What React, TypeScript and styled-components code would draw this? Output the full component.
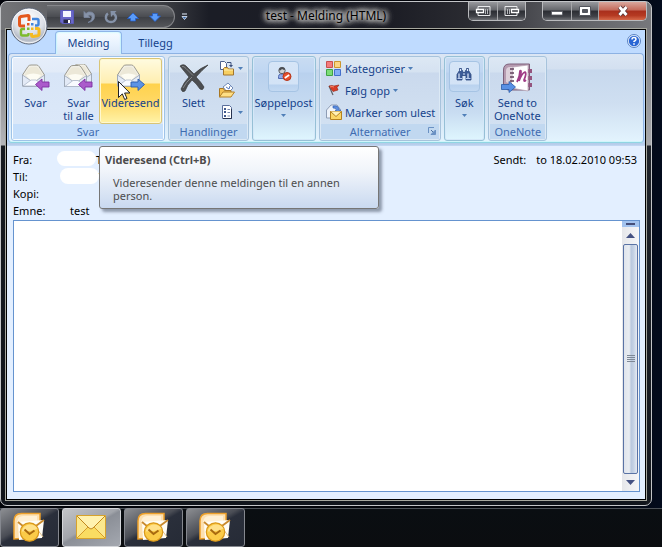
import React from "react";
import styled, { createGlobalStyle, css } from "styled-components";

const GlobalStyle = createGlobalStyle`
  * { box-sizing: border-box; }
  html, body { margin: 0; padding: 0; background: #02040a; }
  body, button { font-family: "Noto Sans", "Open Sans", sans-serif; font-size: 11px; line-height: 13px; }
  button { margin: 0; padding: 0; border: 0; background: none; color: inherit; }
  svg { display: block; flex: none; }
`;

const Desktop = styled.div`
  position: relative;
  display: flex;
  flex-direction: column;
  gap: 2px;
  min-height: 100vh;
  padding-top: 1px;
  background: linear-gradient(90deg, #02040a 90%, #030b1c);
`;

/* ---------- window frame ---------- */

const Window = styled.main`
  flex: 1;
  display: flex;
  flex-direction: column;
  margin-right: 10px;
  padding: 0 4px 4px;
  border: 1px solid #c3c5c8;
  border-radius: 7px;
  background:
    linear-gradient(90deg, #747578 0, #5c5d61 10%, #404247 24%, #1b1d26 32%, #1c1d25 60%, #2a2b31 72%, #5f6065 88%, #77787c 100%) top / 100% 28px no-repeat,
    linear-gradient(180deg, #55575c 0, #b4b5b8 143px, #171b21 144px, #10141b 100%) left / 5px 100% no-repeat,
    linear-gradient(180deg, #6e7076 0, #a8a9ad 143px, #20242b 144px, #15191f 100%) right / 5px 100% no-repeat,
    #11151c;
`;

const TitleBar = styled.header`
  display: grid;
  grid-template-columns: 1fr auto 1fr;
  height: 26px;
`;

const QuickAccess = styled.div`
  display: flex;
  align-items: center;
  align-self: start;
  justify-self: start;
  height: 23px;
  margin: 3px 0 0 42px;
`;

const QuickTools = styled.div`
  display: flex;
  align-items: center;
  gap: 4px;
  height: 23px;
  padding: 0 10px 0 11px;
  border: 1px solid #85868a;
  border-left: 0;
  border-radius: 0 12px 12px 0;
  background: linear-gradient(180deg, #6b6d71, #4b4d52 50%, #3e4045 52%, #55575b);
`;

const QuickButton = styled.button`
  display: grid;
  place-items: center;
  width: 18px;
  height: 18px;
`;

const Title = styled.h1`
  margin: 0;
  padding: 6px 4px 0;
  font-size: 12px;
  line-height: 16px;
  font-weight: 400;
  color: #000;
  text-shadow: 0 0 4px #bbb, 0 0 4px #bbb, 0 0 5px #aaa, 0 0 6px #aaa, 0 0 6px #aaa, 0 0 8px #999, 0 0 8px #999, 0 0 10px #888;
`;

const CaptionArea = styled.div`
  display: flex;
  align-items: flex-start;
  justify-content: flex-end;
  gap: 16px;
`;

const CaptionGroup = styled.div`
  display: flex;
  height: 19px;
  border: 1px solid #b9babd;
  border-top: 0;
  border-radius: 0 0 5px 5px;
  overflow: hidden;
`;

const CaptionButton = styled.button<{ $w: number; $close?: boolean }>`
  display: grid;
  place-items: center;
  width: ${(p) => p.$w}px;
  height: 18px;
  border-right: 1px solid #a5a6a9;
  background: ${(p) =>
    p.$close
      ? "linear-gradient(180deg, #d9a79d 0, #c46a5a 45%, #a92f1c 50%, #b53a22 75%, #d5694a 100%)"
      : "linear-gradient(180deg, #98999d 0, #64666b 45%, #2b2d33 50%, #404248 80%, #6d6f74 100%)"};
  &:last-child { border-right: 0; }
`;

const Client = styled.div`
  flex: 1;
  display: flex;
  flex-direction: column;
  border: 1px solid #a7a89f;
  outline: 1px solid #000;
  outline-offset: -2px;
  padding: 1px;
  background: #e3efff;
`;

const OrbButton = styled.button`
  position: absolute;
  left: 10px;
  top: 7px;
  z-index: 2;
  width: 38px;
  height: 38px;
`;

/* ---------- ribbon ---------- */

const RibbonShell = styled.section`
  padding: 0 1px 3px;
  background: linear-gradient(180deg, #bfdbff 0, #bfdbff 109px, #b4cbe8 114px, #c5daf5 100%);
`;

const TabRow = styled.nav`
  display: flex;
  align-items: flex-end;
  height: 23px;
  padding-left: 47px;
`;

const Tab = styled.button<{ $active?: boolean }>`
  height: 22px;
  width: 67px;
  padding-bottom: 1px;
  color: #15428b;
  border: 1px solid transparent;
  border-bottom: 0;
  border-radius: 4px 4px 0 0;
  ${(p) =>
    p.$active &&
    css`
      position: relative;
      margin-bottom: -1px;
      height: 23px;
      border-color: #8fb5e8;
      background: linear-gradient(180deg, #f7fbff, #e9f3fe 50%, #dbe8f8);
      box-shadow: inset 0 1px 2px #d8fbff, inset 1px 0 1px #c5f2fd, inset -1px 0 1px #c5f2fd;
    `}
`;

const HelpButton = styled.button`
  margin: 0 3px 5px auto;
`;

const Ribbon = styled.div`
  display: flex;
  gap: 3px;
  height: 90px;
  padding: 2px;
  border: 1px solid #8db2e3;
  border-bottom-color: #8fd5e3;
  border-radius: 4px;
  background: linear-gradient(180deg, #dbe6f4 0, #d3e0f0 15px, #c7d8ed 16px, #cfdff1 50px, #e3f4fe 100%);
  box-shadow: inset 0 -1px 0 #cff6fb;
`;

const GroupBox = styled.section<{ $hot?: boolean; $plain?: boolean }>`
  display: flex;
  flex-direction: column;
  height: 85px;
  border: 1px solid ${(p) => (p.$hot ? "#9fc3e8" : p.$plain ? "#96c0d6" : "#a7c3dc")};
  border-radius: 3px;
  ${(p) =>
    p.$hot
      ? css`
          background: linear-gradient(180deg, #e6eefa 0, #e2ebf8 15px, #d8e5f7 16px, #dce9f9 100%);
          box-shadow: inset 0 0 0 1px #f8fcff;
        `
      : p.$plain
        ? css`
            background: linear-gradient(180deg, #c9dcf2 0, #bfd6f2 15px, #b9d1ee 16px, #c8dcf1 55px, #dff6fe 100%);
            box-shadow: inset 0 0 0 1px #d5e8f8;
          `
        : css`
            background: linear-gradient(180deg, #dde8f4 0, #d5e2f1 15px, #cad9ed 16px, #d4e3f3 100%);
            box-shadow: inset 0 0 0 1px #dce9f5;
          `}
`;

const GroupItems = styled.div`
  flex: 1;
  display: flex;
  align-items: flex-start;
  padding: 0 2px 0 1px;
`;

const GroupLabel = styled.div<{ $hot?: boolean }>`
  position: relative;
  height: 15px;
  margin: 0 1px 1px;
  line-height: 15px;
  text-align: center;
  color: #3f6cb0;
  background: ${(p) => (p.$hot ? "#c6dffb" : "#c1d8f0")};
`;

const Launcher = styled.button`
  position: absolute;
  right: 3px;
  top: 3px;
`;

const BigButton = styled.button<{ $w: number; $hover?: boolean }>`
  display: flex;
  flex-direction: column;
  align-items: center;
  width: ${(p) => p.$w}px;
  height: 66px;
  margin-top: 1px;
  padding-top: 2px;
  border: 1px solid transparent;
  border-radius: 3px;
  color: #15428b;
  white-space: nowrap;
  ${(p) =>
    p.$hover &&
    css`
      border-color: #d9c577;
      background: linear-gradient(180deg, #fffbe0 0, #ffeeb0 24px, #ffd24c 25px, #ffd864 42px, #fff3a8 100%);
      box-shadow: inset 0 0 0 1px #fff8cf;
    `}
`;

const BigIcon = styled.span`
  display: grid;
  place-items: center;
  height: 34px;
  margin-bottom: 1px;
`;

const FramedIcon = styled(BigIcon)`
  width: 31px;
  height: 31px;
  margin-bottom: 4px;
  padding-bottom: 6px;
  border: 1px solid #a6c4e4;
  border-radius: 4px;
  background: linear-gradient(180deg, #d6e5f7 0, #d3e3f6 22px, #b9d2ef 23px, #c3d9f2 100%);
`;

const DropMark = styled.span`
  display: grid;
  place-items: center;
  height: 12px;
`;

const SmallColumn = styled.div<{ $wide?: boolean }>`
  display: flex;
  flex-direction: column;
  padding-left: ${(p) => (p.$wide ? 3 : 0)}px;
`;

const SmallButton = styled.button`
  display: flex;
  align-items: center;
  gap: 3px;
  height: 22px;
  padding: 0 3px 0 2px;
  color: #15428b;
  white-space: nowrap;
`;

const HoverAnchor = styled.div`
  position: relative;
`;

const Tooltip = styled.div`
  position: absolute;
  left: 0;
  top: 89px;
  z-index: 5;
  width: 280px;
  min-height: 63px;
  padding: 6px 5px;
  border: 1px solid #767676;
  border-radius: 3px;
  color: #4c4c4c;
  background: linear-gradient(180deg, #fff, #f0f4fa 40%, #c9d9f0);
  box-shadow: 3px 3px 3px rgba(60, 70, 90, 0.5);
`;

const TipTitle = styled.strong`
  display: block;
  margin-bottom: 10px;
`;

const TipText = styled.p`
  margin: 0 24px 0 8px;
`;

/* ---------- message ---------- */

const MessageHead = styled.section`
  display: flex;
  justify-content: space-between;
  padding: 5px 8px 1px 6px;
  color: #000;
`;

const Fields = styled.dl`
  display: grid;
  grid-template-columns: 44px auto;
  grid-auto-rows: 17px;
  margin: 0;
  line-height: 17px;
`;

const Term = styled.dt`
  white-space: nowrap;
`;

const Value = styled.dd`
  display: flex;
  margin: 0;
  padding-left: 13px;
`;

const HiddenName = styled.span<{ $second?: boolean }>`
  width: 39px;
  height: ${(p) => (p.$second ? 16 : 15)}px;
  margin: ${(p) => (p.$second ? "0 0 0 -10px" : "0 0 0 -13px")};
  border-radius: 8px;
  background: #fff;
`;

const Sent = styled.dl`
  display: flex;
  gap: 10px;
  margin: 0;
  line-height: 17px;
`;

const SentValue = styled.dd`
  margin: 0;
`;

const Body = styled.section`
  flex: 1;
  display: flex;
  margin: 0 5px 7px 6px;
  border: 1px solid #6593cf;
  background: #fff;
`;

const Page = styled.article`
  flex: 1;
`;

const ScrollBar = styled.div`
  display: flex;
  flex-direction: column;
  width: 17px;
  background: linear-gradient(90deg, #e6e7ea, #f5f6f8);
`;

const SplitHandle = styled.button`
  display: grid;
  place-items: center;
  height: 6px;
  background: #a3c3ee;
`;

const ScrollButton = styled.button`
  display: grid;
  place-items: center;
  height: 17px;
`;

const Thumb = styled.div`
  flex: 1;
  display: grid;
  place-items: center;
  margin: 0 1px;
  border: 1px solid #5a73a5;
  border-radius: 2px;
  background: linear-gradient(90deg, #dfe4ec 0, #e9edf2 40%, #b9c8de 55%, #c6d3e5 75%, #e6ebf3 100%);
`;

/* ---------- taskbar ---------- */

const Taskbar = styled.footer`
  display: flex;
  gap: 3px;
  height: 39px;
  border-top: 1px solid #4c5157;
  background: linear-gradient(180deg, #0a0e12, #0b0d10);
`;

const TaskButton = styled.button<{ $active?: boolean }>`
  display: grid;
  place-items: center;
  width: 59px;
  height: 39px;
  margin-top: -1px;
  padding-right: 2px;
  padding-bottom: 2px;
  border: 1px solid ${(p) => (p.$active ? "#d4d6da" : "#85888f")};
  border-radius: 3px;
  background: ${(p) =>
    p.$active
      ? "linear-gradient(150deg, #c3c5c9 0, #a2a5ab 45%, #8b8f97 50%, #a4a8b0 100%)"
      : "linear-gradient(150deg, #8c8e92 0, #4a4d55 42%, #2a2f3b 50%, #262b36 100%)"};
`;

/* ---------- drawings ---------- */

const Arrow = () => (
  <svg width="5" height="3" viewBox="0 0 5 3" aria-hidden="true">
    <path d="M0 0h5L2.500 3z" fill="#4f7fb8" />
  </svg>
);

const Envelope = ({ x = 0, y = 0 }: { x?: number; y?: number }) => (
  <g transform={`translate(${x} ${y})`}>
    <path d="M.5 11 6 2.500Q7 1 9 1h5.500Q16 1 17 2.500L22.500 11v11H.5z" fill="#f1efe6" stroke="#9c9a8f" />
    <path d="M2.500 10.500 7 4Q8 3 9 3h5.500l1.500 1 4.500 6.500-6 5.500H8.500z" fill="#ece8d8" />
    <path d="M4 11q7-3 15 0l-4 5H8z" fill="#fdfcf3" />
    <path d="M.5 11 8.500 16.500h6L22.500 11v11H.5z" fill="#e3eaf6" stroke="#98a3b5" strokeWidth=".8" />
    <path d="M1 22l8-6h5l8 6z" fill="#f8fbff" stroke="#a5b0c3" strokeWidth=".7" />
  </g>
);

const PurpleArrow = ({ x }: { x: number }) => (
  <path
    transform={`translate(${x} 0)`}
    d="M.5 20.500 7 15v3h7v5H7v3.500z"
    fill="#ab5bcb"
    stroke="#7d2fa0"
    strokeWidth=".9"
  />
);

const ReplyIcon = () => (
  <svg width="28" height="28" viewBox="0 0 28 28" aria-hidden="true">
    <Envelope />
    <PurpleArrow x={13} />
  </svg>
);

const ReplyAllIcon = () => (
  <svg width="30" height="28" viewBox="0 0 30 28" aria-hidden="true">
    <Envelope x={5} y={-1} />
    <Envelope y={0.5} />
    <PurpleArrow x={14} />
  </svg>
);

const ForwardIcon = () => (
  <svg width="28" height="28" viewBox="0 0 28 28" aria-hidden="true">
    <Envelope />
    <path d="M27.500 20.500 21 15v3h-7v5h7v3.500z" fill="#5c93e4" stroke="#2b5cad" strokeWidth=".9" />
  </svg>
);

const DeleteIcon = () => (
  <svg width="30" height="28" viewBox="0 0 30 28" aria-hidden="true">
    <path
      d="M1 2q4-3 7 1l7 7q6-6 14-9-6 5-12 12 5 5 8 10-1 4-4 2-4-6-8-9-5 5-7 11-3 2-4-2 3-7 8-12Q5 7 1 2z"
      fill="#4c4e51"
      stroke="#38393b"
      strokeWidth=".7"
    />
    <path d="M3 2.500q2-.5 4 2l7 7M4 24q3-6 9-11" stroke="#85878a" fill="none" />
  </svg>
);

const MoveIcon = () => (
  <svg width="16" height="16" viewBox="0 0 16 16" aria-hidden="true">
    <path d="M1.500 1.500h4l2 2v6h-6z" fill="#fff" stroke="#4e6390" />
    <path d="M8 2.500h4v3" stroke="#3c507d" fill="none" />
    <path d="M10 5h4l-2 2.500z" fill="#3c507d" />
    <path d="M4.500 15V8.500l1-1h3l1 1.500h5V15z" fill="#f7cf62" stroke="#a3752c" />
    <path d="M5 10h9" stroke="#fff0b0" />
  </svg>
);

const FolderIcon = () => (
  <svg width="16" height="16" viewBox="0 0 16 16" aria-hidden="true">
    <path d="m4 5 5-4 5 5-5 5z" fill="#fff" stroke="#7089b6" />
    <path d="M7 5l3 2 1-3" stroke="#5578bd" fill="none" />
    <path d="M.5 15V6.500h4l1 2H12V11z" fill="#f4c152" stroke="#a87724" />
    <path d="m.5 15 3.500-5h11.500L12 15z" fill="#ffdf86" stroke="#b3812a" />
  </svg>
);

const RulesIcon = () => (
  <svg width="16" height="16" viewBox="0 0 16 16" aria-hidden="true">
    <path d="M3.500 1.500h7l2 2v11h-9z" fill="#fff" stroke="#5a6f9c" />
    <path d="M5 4h2v2H5zM5 7h2v2H5zM5 11h2v2H5z" fill="#41598c" />
    <path d="M8.500 5.500H11M8.500 8.500H11M8.500 12H11" stroke="#7185ae" />
    <path d="M12.500 5v9.500H4" stroke="#283450" fill="none" />
  </svg>
);

const JunkIcon = () => (
  <svg width="16" height="16" viewBox="0 0 16 16" aria-hidden="true">
    <path d="M2.500 12.500v-2q0-2 2-2.500h3l2 1v3.500z" fill="#8fa9e6" stroke="#5069b0" />
    <circle cx="6" cy="4.500" r="3.200" fill="#d0d2d4" stroke="#5c6066" />
    <path d="M3 4.500Q3 1.200 6.500 1.200q2.500.3 2.500 2.800Q7 4 6 3 5 4.500 3 4.500z" fill="#4b4e54" />
    <circle cx="11" cy="10.500" r="4" fill="#e8502c" stroke="#b5361a" />
    <path d="m8.800 12 4.400-3" stroke="#fff" strokeWidth="1.600" />
  </svg>
);

const CategoriesIcon = () => (
  <svg width="16" height="16" viewBox="0 0 16 16" aria-hidden="true">
    <path d="M.5 1.500h6v6h-6z" fill="#f47c7c" stroke="#c95050" />
    <path d="M8.500 1.500h6v6h-6z" fill="#fbd582" stroke="#cc962e" />
    <path d="M.5 9.500h6v6h-6z" fill="#7cdd76" stroke="#40a344" />
    <path d="M8.500 9.500h6v6h-6z" fill="#84aef6" stroke="#446fcb" />
  </svg>
);

const FlagIcon = () => (
  <svg width="16" height="16" viewBox="0 0 16 16" aria-hidden="true">
    <path d="m3 4 4 9" stroke="#5d6067" strokeWidth="1.200" />
    <path d="M3 4q3-1 5 0l5-1-2 2.500 1 2.500-5 1.500z" fill="#d83c27" stroke="#93220f" strokeWidth=".6" />
    <path d="M4 5q2-1 4 0" stroke="#f58a6b" fill="none" />
  </svg>
);

const UnreadIcon = () => (
  <svg width="16" height="16" viewBox="0 0 16 16" aria-hidden="true">
    <path d="M.5 14V6L5 1h6l3 4v9z" fill="#eef3fa" stroke="#8e9db5" />
    <path d="M7 2q6-1 6 4h2l-3 3-3-3h2q0-2-4-2z" fill="#5b8de0" stroke="#2e5cae" strokeWidth=".6" />
    <path d="M4.500 7.500h11v8h-11z" fill="#fbd667" stroke="#b5821f" />
    <path d="m4.500 7.500 5.500 5 5.500-5" fill="#fff2b8" stroke="#b5821f" />
  </svg>
);

const BinocularsIcon = () => (
  <svg width="16" height="16" viewBox="0 0 16 16" aria-hidden="true">
    <path d="M3.500 2.500h2v2h1l.5 2h2l.5-2h1v-2h2v2l2.500 4v5.500h-5V9.500H6V14H1V8.500l2.500-4z" fill="#3d5c98" stroke="#2b477f" strokeWidth=".8" />
    <path d="M3 7.500V13M12 7.500V13M4.500 3v2M11.500 3v2" stroke="#dfe9fa" strokeWidth="1.200" />
    <path d="M1.500 12.500H6M10 12.500h4.500" stroke="#b9cdf0" />
    <path d="M7 8h2" stroke="#dfe9fa" />
  </svg>
);

const OneNoteIcon = () => (
  <svg width="32" height="32" viewBox="0 0 32 32" aria-hidden="true">
    <path d="M2.500 22V8q0-6 6-6h20v26h-22z" fill="#b69bb0" stroke="#7d607a" />
    <path d="M5 20V9q0-4 4-4h5v20z" fill="#ddd0da" />
    <path d="M27 7h4v4h-4zM27 14h4v4h-4zM27 21h4v4h-4z" fill="#94547e" />
    <path d="m12 5 15-2v26l-17-3z" fill="#fff" stroke="#b5a1b2" strokeWidth=".7" />
    <path d="M9 7h4M9 11h4M9 15h4M9 19h4" stroke="#60405b" strokeWidth="1.500" />
    <path d="M16 20q3-6 3-11 1-1 1 1 0 4-2 9 3-8 6-9 2 1-1 8 0 2 2 0" fill="none" stroke="#a13d87" strokeWidth="1.800" />
    <path d="M14.500 25 8 19.500V22.500H.5v5H8v3z" fill="#5990e4" stroke="#2a5aa8" strokeWidth=".8" />
  </svg>
);

const LauncherIcon = () => (
  <svg width="8" height="8" viewBox="0 0 8 8" aria-hidden="true">
    <path d="M.5 6V.5H6" fill="none" stroke="#6a91c3" />
    <path d="M3 3l2.500 2.500" stroke="#4c719f" />
    <path d="M7.500 3v4.500H3z" fill="#6a91c3" stroke="#6a91c3" />
  </svg>
);

const OfficeOrb = () => (
  <svg width="38" height="38" viewBox="0 0 38 38" aria-hidden="true">
    <defs>
      <radialGradient id="orb" cx=".5" cy=".3" r=".75">
        <stop offset="0" stopColor="#fff" />
        <stop offset=".55" stopColor="#dde0e7" />
        <stop offset=".8" stopColor="#b4bac5" />
        <stop offset="1" stopColor="#f2f6fb" />
      </radialGradient>
    </defs>
    <circle cx="19" cy="19" r="18" fill="url(#orb)" stroke="#596273" />
    <circle cx="19" cy="19" r="16.800" fill="none" stroke="#fff" strokeOpacity=".7" />
    <g fill="none">
      <path d="M15 19h-4q-1.500 0-1.500-1.500V11q0-1 1.500-1.500l7-1q1 0 1 1V14" stroke="#e4581d" strokeWidth="3" />
      <path d="M22 12h5q1.500 0 1.500 1.500V17q0 1.500-1.500 1.500h-2" stroke="#4386dc" strokeWidth="2.400" />
      <path d="M15 22h-2.500q-1.500 0-1.500 1.500V27q0 1.500 1.500 1.500H17q1.500 0 1.500-1.500v-1" stroke="#7dbb2c" strokeWidth="2.400" />
      <path d="M25 21.500h2.500q1.500 0 1.500 1.500v4.500q0 1-1.500 1.300L23 29.500q-1.500 0-1.500-1.500v-2" stroke="#f5ba20" strokeWidth="3" />
    </g>
    <path d="M17 16h2.500v2.500H17z" fill="#e4581d" />
    <path d="M21 16h2.500v2.500H21z" fill="#4386dc" />
    <path d="M17 20.500h2.500V23H17z" fill="#7dbb2c" />
    <path d="M21 20.500h2.500V23H21z" fill="#f5ba20" />
  </svg>
);

const SaveIcon = () => (
  <svg width="14" height="14" viewBox="0 0 14 14" aria-hidden="true">
    <path d="M.5.5h13v13H2L.5 12z" fill="#6967c8" stroke="#5a5ab8" />
    <path d="M3 1h8v6H3z" fill="#f4f6ff" />
    <path d="M3.500 9.500h7V13h-7z" fill="#23243f" />
    <path d="M8 10h2v3H8z" fill="#fff" />
  </svg>
);

const UndoIcon = () => (
  <svg width="14" height="14" viewBox="0 0 14 14" aria-hidden="true">
    <path d="M2 1.500v6h6L6 5.500q4-1.500 4 2t-4 5q6.500-1 6.500-6t-6-4.500L4 3.500z" fill="#8793a9" stroke="#7b88a0" strokeWidth=".8" />
  </svg>
);

const RepeatIcon = () => (
  <svg width="14" height="14" viewBox="0 0 14 14" aria-hidden="true">
    <path d="M4 3.500Q1.500 5 2 8.500 3 12 7 12t5-4q0-3-2.500-4.500" fill="none" stroke="#8592a8" strokeWidth="2.400" />
    <path d="M6.500 1h6l-5.500 6z" fill="#8592a8" />
  </svg>
);

const UpIcon = () => (
  <svg width="14" height="14" viewBox="0 0 14 14" aria-hidden="true">
    <path d="m7 3 5.500 5.500H9.500V11h-5V8.500h-3z" fill="#5a9bf8" stroke="#245ec9" strokeWidth=".8" />
  </svg>
);

const DownIcon = () => (
  <svg width="14" height="14" viewBox="0 0 14 14" aria-hidden="true">
    <path d="M7 11.500 12.500 6H9.500V3.500h-5V6h-3z" fill="#5a9bf8" stroke="#245ec9" strokeWidth=".8" />
  </svg>
);

const MoreIcon = () => (
  <svg width="7" height="8" viewBox="0 0 7 8" aria-hidden="true">
    <path d="M1 1h5" stroke="#e6f0ff" />
    <path d="M1 3.500h5L3.500 6.500z" fill="#3767a8" stroke="#e6f0ff" strokeWidth=".8" />
  </svg>
);

const DockIcon = ({ flip }: { flip?: boolean }) => (
  <svg width="16" height="12" viewBox="0 0 16 12" aria-hidden="true">
    <g transform={flip ? "translate(16 0) scale(-1 1)" : undefined} fill="none">
      <path d="M3 4V1.500h12v9H3V8" stroke="#e8e9eb" />
      <path d="M1.500 4.500h7v3h-7z" fill="#33363c" stroke="#fff" strokeWidth="1.300" />
      <path d="M10.500 4v5M12.500 4v5" stroke="#b4b6ba" />
    </g>
  </svg>
);

const MinIcon = () => (
  <svg width="12" height="10" viewBox="0 0 12 10" aria-hidden="true">
    <path d="M.5 5.500h11v3.500H.5z" fill="#fff" stroke="#53565e" strokeWidth=".8" />
  </svg>
);

const MaxIcon = () => (
  <svg width="12" height="10" viewBox="0 0 12 10" aria-hidden="true">
    <path d="M.5.5h11v9H.5z" fill="#fff" stroke="#53565e" />
    <path d="M3.500 3.500h5v3h-5z" fill="#53565e" stroke="#53565e" />
  </svg>
);

const CloseIcon = () => (
  <svg width="14" height="12" viewBox="0 0 14 12" aria-hidden="true">
    <path d="M3.500 2l7 8M10.500 2l-7 8" stroke="#5e3a3c" strokeWidth="4.600" />
    <path d="M3.500 2l7 8M10.500 2l-7 8" stroke="#fff" strokeWidth="2.800" />
  </svg>
);

const HelpIcon = () => (
  <svg width="14" height="14" viewBox="0 0 14 14" aria-hidden="true">
    <circle cx="7" cy="7" r="6.500" fill="#eaf3ff" stroke="#5a83c2" />
    <circle cx="7" cy="7" r="5.200" fill="#2a66d4" />
    <path d="M5 5.500Q5 3.500 7 3.500t2 1.700Q9 6.300 7 7.500V8" fill="none" stroke="#fff" strokeWidth="1.500" />
    <path d="M6.200 9.200h1.600v1.500H6.200z" fill="#fff" />
  </svg>
);

const ScrollArrow = ({ down }: { down?: boolean }) => (
  <svg width="9" height="5" viewBox="0 0 9 5" aria-hidden="true">
    <path d={down ? "M0 0h9L4.500 5z" : "M0 5h9L4.500 0z"} fill="#455283" />
  </svg>
);

const Grip = () => (
  <svg width="8" height="8" viewBox="0 0 8 8" aria-hidden="true">
    <path d="M0 .5h8M0 2.500h8M0 4.500h8M0 6.500h8" stroke="#7e8896" />
  </svg>
);

const OutlookIcon = () => (
  <svg width="32" height="30" viewBox="0 0 32 30" aria-hidden="true">
    <path d="M1 27V9q0-7.500 7.500-7.500H27V25z" fill="#fce0b0" stroke="#eda02a" strokeWidth="1.500" />
    <path d="M4 10q1-6 6-6h14v6z" fill="#fff0d4" />
    <path d="m5 10 26-2-2 18-23 2z" fill="#fffdf6" />
    <path d="m5 10 11 9L31 8" fill="none" stroke="#c98a2e" strokeWidth="1.800" />
    <path d="m24 17 6 8" stroke="#e3c38a" />
    <circle cx="16.500" cy="20" r="9.200" fill="#fbcb48" stroke="#d9981b" strokeWidth="1.200" />
    <path d="M9 18q2-5 8-5.500 5 0 7.500 4-5 3-15.500 3z" fill="#ffe18a" />
    <path d="m11.500 17.500 5 4.500 5-3.500" fill="none" stroke="#a8690f" strokeWidth="2" />
  </svg>
);

const MailIcon = () => (
  <svg width="30" height="24" viewBox="0 0 30 24" aria-hidden="true">
    <path d="M.5.5h29v23H.5z" fill="#fbe88e" stroke="#d6a22c" />
    <path d="m1 23 11-11h6l11 11" fill="#f9dc62" stroke="#d79d2c" />
    <path d="m1 1 12 12q2 2 4 0L29 1" fill="#fff2b0" stroke="#c18820" />
  </svg>
);

const CursorMark = styled.span`
  position: absolute;
  left: 19px;
  top: 24px;
  z-index: 6;
  pointer-events: none;
`;

const Cursor = () => (
  <svg width="13" height="20" viewBox="0 0 13 20" aria-hidden="true">
    <path d="M.5.5v16l3.800-3.600 2.400 5.600 2.300-1-2.400-5.500h5.300z" fill="#fff" stroke="#222" />
  </svg>
);

const tasks = [
  { name: "Outlook", active: false },
  { name: "test - Melding (HTML)", active: true },
  { name: "Outlook", active: false },
  { name: "Outlook", active: false },
];

export default function App() {
  return (
    <>
      <GlobalStyle />
      <Desktop>
        <OrbButton aria-label="Office">
          <OfficeOrb />
        </OrbButton>
        <Window>
          <TitleBar>
            <QuickAccess>
              <QuickTools>
                <QuickButton aria-label="Lagre"><SaveIcon /></QuickButton>
                <QuickButton aria-label="Angre"><UndoIcon /></QuickButton>
                <QuickButton aria-label="Gjenta"><RepeatIcon /></QuickButton>
                <QuickButton aria-label="Forrige"><UpIcon /></QuickButton>
                <QuickButton aria-label="Neste"><DownIcon /></QuickButton>
              </QuickTools>
              <QuickButton aria-label="Tilpass"><MoreIcon /></QuickButton>
            </QuickAccess>
            <Title>test - Melding (HTML)</Title>
            <CaptionArea>
              <CaptionGroup>
                <CaptionButton $w={29} aria-label="Fest til venstre"><DockIcon /></CaptionButton>
                <CaptionButton $w={27} aria-label="Fest til høyre"><DockIcon flip /></CaptionButton>
              </CaptionGroup>
              <CaptionGroup>
                <CaptionButton $w={29} aria-label="Minimer"><MinIcon /></CaptionButton>
                <CaptionButton $w={27} aria-label="Maksimer"><MaxIcon /></CaptionButton>
                <CaptionButton $w={47} $close aria-label="Lukk"><CloseIcon /></CaptionButton>
              </CaptionGroup>
            </CaptionArea>
          </TitleBar>

          <Client>
            <RibbonShell>
              <TabRow>
                <Tab $active>Melding</Tab>
                <Tab>Tillegg</Tab>
                <HelpButton aria-label="Hjelp"><HelpIcon /></HelpButton>
              </TabRow>
              <Ribbon>
                <GroupBox $hot>
                  <GroupItems>
                    <BigButton $w={45}>
                      <BigIcon><ReplyIcon /></BigIcon>
                      Svar
                    </BigButton>
                    <BigButton $w={41}>
                      <BigIcon><ReplyAllIcon /></BigIcon>
                      <span>Svar<br />til alle</span>
                    </BigButton>
                    <HoverAnchor>
                      <BigButton $w={63} $hover aria-describedby="forward-tip">
                        <BigIcon><ForwardIcon /></BigIcon>
                        Videresend
                      </BigButton>
                      <CursorMark><Cursor /></CursorMark>
                      <Tooltip id="forward-tip" role="tooltip">
                        <TipTitle>Videresend (Ctrl+B)</TipTitle>
                        <TipText>Videresender denne meldingen til en annen person.</TipText>
                      </Tooltip>
                    </HoverAnchor>
                  </GroupItems>
                  <GroupLabel $hot>Svar</GroupLabel>
                </GroupBox>

                <GroupBox>
                  <GroupItems>
                    <BigButton $w={47}>
                      <BigIcon><DeleteIcon /></BigIcon>
                      Slett
                    </BigButton>
                    <SmallColumn>
                      <SmallButton aria-label="Flytt til mappe"><MoveIcon /><Arrow /></SmallButton>
                      <SmallButton aria-label="Andre handlinger"><FolderIcon /></SmallButton>
                      <SmallButton aria-label="Opprett regel"><RulesIcon /><Arrow /></SmallButton>
                    </SmallColumn>
                  </GroupItems>
                  <GroupLabel>Handlinger</GroupLabel>
                </GroupBox>

                <GroupBox $plain>
                  <GroupItems>
                    <BigButton $w={59}>
                      <FramedIcon><JunkIcon /></FramedIcon>
                      Søppelpost
                      <DropMark><Arrow /></DropMark>
                    </BigButton>
                  </GroupItems>
                </GroupBox>

                <GroupBox>
                  <GroupItems>
                    <SmallColumn $wide>
                      <SmallButton><CategoriesIcon />Kategoriser<Arrow /></SmallButton>
                      <SmallButton><FlagIcon />Følg opp<Arrow /></SmallButton>
                      <SmallButton><UnreadIcon />Marker som ulest</SmallButton>
                    </SmallColumn>
                  </GroupItems>
                  <GroupLabel>
                    Alternativer
                    <Launcher aria-label="Flere alternativer"><LauncherIcon /></Launcher>
                  </GroupLabel>
                </GroupBox>

                <GroupBox $plain>
                  <GroupItems>
                    <BigButton $w={36}>
                      <FramedIcon><BinocularsIcon /></FramedIcon>
                      Søk
                      <DropMark><Arrow /></DropMark>
                    </BigButton>
                  </GroupItems>
                </GroupBox>

                <GroupBox>
                  <GroupItems>
                    <BigButton $w={54}>
                      <BigIcon><OneNoteIcon /></BigIcon>
                      <span>Send to<br />OneNote</span>
                    </BigButton>
                  </GroupItems>
                  <GroupLabel>OneNote</GroupLabel>
                </GroupBox>
              </Ribbon>
            </RibbonShell>

            <MessageHead>
              <Fields>
                <Term>Fra:</Term>
                <Value><HiddenName />T</Value>
                <Term>Til:</Term>
                <Value><HiddenName $second />T</Value>
                <Term>Kopi:</Term>
                <Value />
                <Term>Emne:</Term>
                <Value>test</Value>
              </Fields>
              <Sent>
                <Term>Sendt:</Term>
                <SentValue>to 18.02.2010 09:53</SentValue>
              </Sent>
            </MessageHead>

            <Body>
              <Page aria-label="Meldingstekst" />
              <ScrollBar>
                <SplitHandle aria-label="Del vindu">
                  <svg width="9" height="2" aria-hidden="true"><path d="M0 0h9v2H0z" fill="#454e78" /></svg>
                </SplitHandle>
                <ScrollButton aria-label="Rull opp"><ScrollArrow /></ScrollButton>
                <Thumb><Grip /></Thumb>
                <ScrollButton aria-label="Rull ned"><ScrollArrow down /></ScrollButton>
              </ScrollBar>
            </Body>
          </Client>
        </Window>

        <Taskbar>
          {tasks.map((task, i) => (
            <TaskButton key={i} $active={task.active} aria-label={task.name}>
              {task.active ? <MailIcon /> : <OutlookIcon />}
            </TaskButton>
          ))}
        </Taskbar>
      </Desktop>
    </>
  );
}
